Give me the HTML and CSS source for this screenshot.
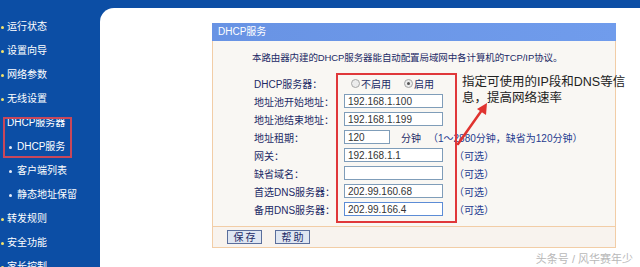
FILE: index.html
```html
<!DOCTYPE html>
<html lang="zh-CN">
<head>
  <meta charset="UTF-8">
  <title>DHCP服务</title>
  <link rel="stylesheet" href="styles.css">
</head>
<body>
  <div class="topbar"></div>
  <div class="layout">
    <!-- 左侧菜单 -->
    <ul class="menu">
      <li class="item">运行状态</li>
      <li class="item">设置向导</li>
      <li class="item">网络参数</li>
      <li class="item">无线设置</li>
      <li class="group">DHCP服务器</li>
      <li class="sub">DHCP服务</li>
      <li class="sub">客户端列表</li>
      <li class="sub">静态地址保留</li>
      <li class="item">转发规则</li>
      <li class="item">安全功能</li>
      <li class="item">家长控制</li>
      <div class="menu-mark"></div>
    </ul>

    <!-- 主内容 -->
    <div class="main">
      <div class="panel">
        <div class="panel-head">DHCP服务</div>
        <div class="panel-body">
          <p class="intro">本路由器内建的DHCP服务器能自动配置局域网中各计算机的TCP/IP协议。</p>
          <div class="form">
            <div class="row">
              <span class="label">DHCP服务器：</span>
              <span class="field radios"><span class="radio"></span>不启用<span class="radio on"></span>启用</span>
            </div>
            <div class="row">
              <span class="label">地址池开始地址：</span>
              <span class="field"><input class="ip" value="192.168.1.100"></span>
            </div>
            <div class="row">
              <span class="label">地址池结束地址：</span>
              <span class="field"><input class="ip" value="192.168.1.199"></span>
            </div>
            <div class="row">
              <span class="label">地址租期：</span>
              <span class="field"><input class="short" value="120"><span class="unit">分钟</span><span class="hint">（1～2880分钟，缺省为120分钟）</span></span>
            </div>
            <div class="row">
              <span class="label">网关：</span>
              <span class="field"><input class="ip" value="192.168.1.1"><span class="opt">（可选）</span></span>
            </div>
            <div class="row">
              <span class="label">缺省域名：</span>
              <span class="field"><input class="ip" value=""><span class="opt">（可选）</span></span>
            </div>
            <div class="row">
              <span class="label">首选DNS服务器：</span>
              <span class="field"><input class="ip" value="202.99.160.68"><span class="opt">（可选）</span></span>
            </div>
            <div class="row">
              <span class="label">备用DNS服务器：</span>
              <span class="field"><input class="ip focus" value="202.99.166.4"><span class="opt">（可选）</span></span>
            </div>
          </div>
          <div class="form-mark"></div>
        </div>
        <div class="panel-foot">
          <button class="btn">保 存</button>
          <button class="btn">帮 助</button>
        </div>
      </div>

      <div class="note">指定可使用的IP段和DNS等信息，提高网络速率</div>
      <svg class="arrow" width="40" height="50" viewBox="0 0 40 50">
        <line x1="6" y1="46" x2="30" y2="12" stroke="#e0332f" stroke-width="2.5" stroke-linecap="round"/>
        <polygon points="35,5 34,17 25,11" fill="#e0332f"/>
      </svg>
      <div class="watermark">头条号 / 风华赛年少</div>
    </div>
  </div>
</body>
</html>
```

FILE: styles.css
```css
* {
  box-sizing: border-box;
}

body {
  margin: 0;
  height: 100vh;
  overflow: hidden;
  background: #0c4ea5;
  font-family: "Liberation Sans", "Noto Sans CJK SC", sans-serif;
  font-size: 10px;
}

.topbar {
  height: 8px;
}

.layout {
  display: flex;
  height: calc(100vh - 8px);
}

/* 菜单 */
.menu {
  position: relative;
  width: 100px;
  margin: 0;
  padding: 7px 0 0;
  list-style: none;
  color: #fff;
}

.menu li {
  position: relative;
  height: 24px;
  line-height: 24px;
  padding-left: 7px;
  white-space: nowrap;
}

.menu .item::before {
  content: "";
  position: absolute;
  left: 1px;
  top: 11px;
  width: 3px;
  height: 3px;
  border-radius: 50%;
  background: #f4e36a;
}

.menu .sub {
  padding-left: 17px;
}

.menu .sub::before {
  content: "";
  position: absolute;
  left: 9px;
  top: 11px;
  width: 3px;
  height: 3px;
  border-radius: 50%;
  background: #e8eefa;
}

.menu-mark {
  position: absolute;
  left: 3px;
  top: 109px;
  width: 69px;
  height: 41px;
  border: 2px solid #c9475a;
}

/* 主区域 */
.main {
  position: relative;
  flex: 1;
  background: #fff;
  border-top-left-radius: 14px;
}

.panel {
  position: relative;
  width: 404px;
  margin: 15px 0 0 112px;
  background: #f9f7f3;
  border: 1px solid #f2cda6;
  border-top: none;
}

.panel-head {
  height: 18px;
  line-height: 18px;
  margin: 0 -1px;
  padding-left: 6px;
  background: linear-gradient(to right, #6893e4, #709cec);
  color: #fff;
}

.panel-body {
  padding: 10px 0 8px 41px;
  color: #1c2a66;
}

.intro {
  margin: 0 0 9px -2px;
  height: 14px;
  line-height: 14px;
  font-size: 9.5px;
  letter-spacing: -0.1px;
  white-space: nowrap;
}

.row {
  display: grid;
  grid-template-columns: 90px auto;
  align-items: center;
  height: 18px;
}

.field {
  display: flex;
  align-items: center;
  white-space: nowrap;
}

.radios {
  padding-left: 7px;
}

.radio {
  position: relative;
  width: 9px;
  height: 9px;
  margin-right: 1px;
  border-radius: 50%;
  border: 1px solid #a6a6a6;
  background: #ececec;
}

.radio.on {
  margin-left: 13px;
}

.radio.on::after {
  content: "";
  position: absolute;
  left: 2px;
  top: 2px;
  width: 3px;
  height: 3px;
  border-radius: 50%;
  background: #555;
}

input {
  height: 14px;
  padding: 0 3px;
  border: 1px solid #7f9db9;
  background: #fff;
  font-family: "Liberation Sans", sans-serif;
  font-size: 10px;
  color: #333;
}

.ip {
  width: 99px;
}

.short {
  width: 46px;
}

.focus {
  border-color: #5c8cd6;
}

.unit {
  margin-left: 11px;
}

.hint {
  margin-left: 7px;
  color: #1f3b8f;
}

.opt {
  margin-left: 11px;
  color: #1f3b8f;
}

.form-mark {
  position: absolute;
  left: 123px;
  top: 50px;
  width: 121px;
  height: 150px;
  border: 2px solid #e0383a;
}

.panel-foot {
  display: flex;
  align-items: center;
  gap: 13px;
  height: 21px;
  padding-left: 14px;
  border-top: 1px solid #f2cda6;
  background: #f8f3ee;
}

.btn {
  width: 35px;
  height: 14px;
  padding: 0;
  border: 1px solid #5a6e9c;
  background: #dfe6f2;
  font-family: "Noto Sans CJK SC", sans-serif;
  font-size: 10px;
  line-height: 12px;
  color: #1c2a66;
}

/* 标注 */
.note {
  position: absolute;
  left: 362px;
  top: 66px;
  width: 172px;
  font-size: 12.5px;
  line-height: 16px;
  color: #222;
}

.arrow {
  position: absolute;
  left: 352px;
  top: 90px;
}

.watermark {
  position: absolute;
  right: 7px;
  bottom: 1px;
  font-size: 11px;
  color: #b8b8b8;
}
```
